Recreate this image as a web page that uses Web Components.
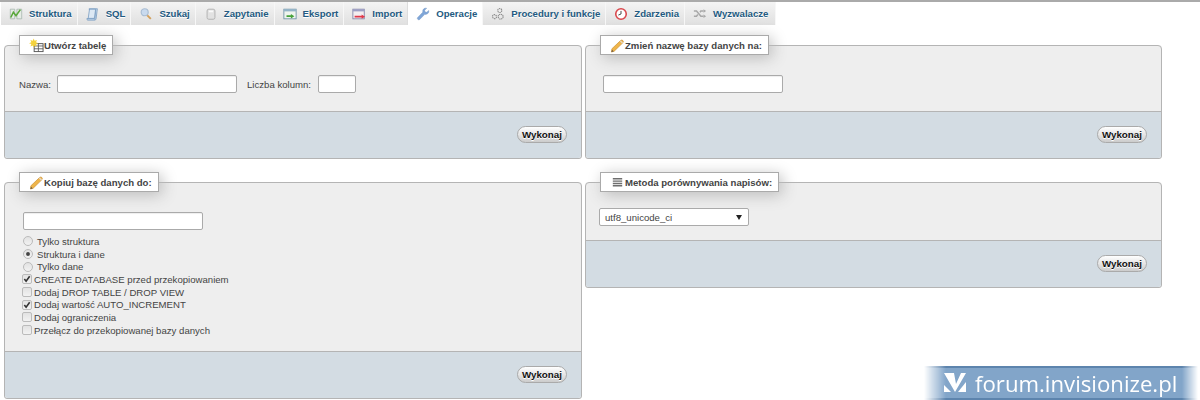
<!DOCTYPE html>
<html lang="pl">
<head>
<meta charset="utf-8">
<title>Operacje</title>
<style>
  html, body { margin: 0; padding: 0; background: #fff; }
  body { font-family: "Liberation Sans", Arial, sans-serif; font-size: 9.6px; color: #444; width: 1200px; height: 400px; overflow: hidden; }
  .kolumny { display: grid; grid-template-columns: 578px 577px; column-gap: 3px; row-gap: 13px; padding: 10px 0 0 4px; align-items: start; }
  .wiersz { display: flex; align-items: center; gap: 9px; }
  .lista { display: flex; flex-direction: column; }
</style>
</head>
<body>

<pasek-zakladek>
  <zakladka-menu ikona="struktura" etykieta="Struktura"></zakladka-menu>
  <zakladka-menu ikona="sql" etykieta="SQL"></zakladka-menu>
  <zakladka-menu ikona="szukaj" etykieta="Szukaj"></zakladka-menu>
  <zakladka-menu ikona="zapytanie" etykieta="Zapytanie"></zakladka-menu>
  <zakladka-menu ikona="eksport" etykieta="Eksport"></zakladka-menu>
  <zakladka-menu ikona="import" etykieta="Import"></zakladka-menu>
  <zakladka-menu ikona="operacje" etykieta="Operacje" aktywna></zakladka-menu>
  <zakladka-menu ikona="procedury" etykieta="Procedury i funkcje"></zakladka-menu>
  <zakladka-menu ikona="zdarzenia" etykieta="Zdarzenia"></zakladka-menu>
  <zakladka-menu ikona="wyzwalacze" etykieta="Wyzwalacze" style="padding-right:7px"></zakladka-menu>
</pasek-zakladek>

<div class="kolumny">
  <panel-operacji ikona="nowa" tytul="Utwórz tabelę" tresc="66">
    <div class="wiersz" style="padding-top:20px">
      <span>Nazwa:</span>
      <pole-tekstowe szerokosc="180" style="margin:0 1px 0 -3px"></pole-tekstowe>
      <span>Liczba kolumn:</span>
      <pole-tekstowe szerokosc="38" style="margin-left:-2px"></pole-tekstowe>
    </div>
  </panel-operacji>

  <panel-operacji ikona="olowek" tytul="Zmień nazwę bazy danych na:" tresc="66">
    <div style="padding:20px 0 0 3px"><pole-tekstowe szerokosc="180"></pole-tekstowe></div>
  </panel-operacji>

  <panel-operacji ikona="olowek" tytul="Kopiuj bazę danych do:" tresc="169">
    <div class="lista" style="padding:20px 0 0 4px">
      <pole-tekstowe szerokosc="180" style="margin-bottom:5px"></pole-tekstowe>
      <pole-wyboru typ="radio">Tylko struktura</pole-wyboru>
      <pole-wyboru typ="radio" zaznaczone>Struktura i dane</pole-wyboru>
      <pole-wyboru typ="radio">Tylko dane</pole-wyboru>
      <pole-wyboru zaznaczone>CREATE DATABASE przed przekopiowaniem</pole-wyboru>
      <pole-wyboru>Dodaj DROP TABLE / DROP VIEW</pole-wyboru>
      <pole-wyboru zaznaczone>Dodaj wartość AUTO_INCREMENT</pole-wyboru>
      <pole-wyboru>Dodaj ograniczenia</pole-wyboru>
      <pole-wyboru>Przełącz do przekopiowanej bazy danych</pole-wyboru>
    </div>
  </panel-operacji>

  <panel-operacji ikona="metoda" tytul="Metoda porównywania napisów:" tresc="58">
    <div style="padding:16px 0 0 0;margin-left:-1px"><lista-napisow>utf8_unicode_ci</lista-napisow></div>
  </panel-operacji>
</div>

<znak-forum>forum.invisionize.pl</znak-forum>

<script>
// ikony rysowane recznie, 16x16
const IKONY = {
  struktura: `<path d="M1.5 2.5h5v11h-5zM9 2.5h5.5v11H9z" fill="#e6ece6" stroke="#9db0a6" stroke-width=".8"/><path d="M2 12l3-6 3 4 5-7" fill="none" stroke="#58a83a" stroke-width="1.8"/>`,
  sql: `<path d="M3.5 2h9.5l-1.5 11.5q-.2 1.5-1.5 1.5H2q-1.2-.2-1-1.8h8q0 1 1 .6L11 3.5H4z" fill="#c3d6ea" stroke="#6d93bb" stroke-width=".8"/><path d="M4 2.5l-1.5 10.5h7l1.5-10.5z" fill="#dce8f4" stroke="#6d93bb" stroke-width=".8"/>`,
  szukaj: `<circle cx="6.5" cy="6" r="4" fill="#c9daee" stroke="#a9bdd3" stroke-width="1.3"/><path d="M9.5 9.5l4 4" stroke="#d3a05c" stroke-width="2.2"/>`,
  zapytanie: `<rect x="3.5" y="2.5" width="9" height="11.5" rx="2" fill="#e2e2e2" stroke="#adadad"/><rect x="5.5" y="4" width="5" height="2" fill="#fafafa"/>`,
  eksport: `<rect x="1" y="2.5" width="14" height="11" fill="#eef4ee" stroke="#6f93a6"/><rect x="1" y="2.5" width="14" height="2.5" fill="#93b4c8"/><path d="M4 9.5h5V8l4 2.5-4 2.5v-1.5H4z" fill="#45a23a"/>`,
  import: `<rect x="1" y="2.5" width="13" height="11" fill="#f3eef0" stroke="#8285a8"/><rect x="1" y="2.5" width="13" height="2.5" fill="#9d9fc4"/><path d="M3 10h8V8.5l4 2.5-4 2.5V12H3z" fill="#e0384a"/>`,
  operacje: `<path d="M2.5 14.5q-1.5-1-.8-2.3l6-6.2q-.5-3 1.5-4.2 1.5-.8 3-.3L9.8 3.8l.6 1.8 1.9.5 2.200-2.100q.5 2-.7 3.200-1.400 1.500-3.800 1.200L4.200 14.300q-.8.7-1.700.2z" fill="#7fa6d8" stroke="#6c90c2" stroke-width=".5"/>`,
  procedury: `<g fill="none" stroke="#8c8c8c" stroke-width="1.3"><circle cx="4" cy="11" r="2.3" stroke-dasharray="1.5 .7"/><circle cx="11" cy="11" r="2.8" stroke-dasharray="1.5 .7"/><circle cx="10" cy="4" r="2.3" stroke-dasharray="1.5 .7"/></g>`,
  zdarzenia: `<circle cx="8" cy="8" r="6" fill="#fff" stroke="#d9474c" stroke-width="1.8"/><path d="M8 4.5V8l-3 1.2" fill="none" stroke="#444" stroke-width="1.1"/>`,
  wyzwalacze: `<path d="M1 4.5h3l5 6h3M1 10.5h3l1.5-2M8 6l1-1.5h3" fill="none" stroke="#a8a8a8" stroke-width="1.7"/><path d="M12 2.5l3 2-3 2zM12 8.5l3 2-3 2z" fill="#a8a8a8"/>`,
  nowa: `<rect x="5.5" y="6" width="9.5" height="8.5" fill="#fff" stroke="#555"/><path d="M5.5 8.5h9.5M5.5 11.5h9.5M10 6v8.5" stroke="#555" stroke-width=".9"/><path d="M5 .5l1 2.5 2.5-1-1 2.5 2.5 1-2.5 1 1 2.5-2.5-1-1 2.5-1-2.5-2.5 1 1-2.5L0 5.5l2.5-1-1-2.5L4 3z" fill="#f4d23c"/>`,
  olowek: `<path d="M2 11.5L11.5 2.5q1.2-.8 2.2.2t.2 2.2L4.5 14 1.5 15z" fill="#efb54a" stroke="#c98f34" stroke-width=".7"/><path d="M11 3l2.5 2.5" stroke="#e7d9c2" stroke-width="1.5"/><path d="M1.500 15l.7-2.5 1.8 1.8z" fill="#6a5a48"/>`,
  metoda: `<path d="M3 4h10M3 6.5h10M3 9h10M3 11.5h10" stroke="#6e6e6e" stroke-width="1.5"/>`
};
const ikona = (nazwa, r = 16) => `<svg width="${r}" height="${r}" viewBox="0 0 16 16" aria-hidden="true">${IKONY[nazwa]}</svg>`;

class PasekZakladek extends HTMLElement {
  constructor() {
    super();
    this.attachShadow({ mode: 'open' }).innerHTML = `
      <style>
        :host { display: flex; height: 23px; border-top: 2px solid #aaa; padding-left: 1px; }
      </style>
      <slot></slot>`;
  }
}

class ZakladkaMenu extends HTMLElement {
  constructor() {
    super();
    this.attachShadow({ mode: 'open' }).innerHTML = `
      <style>
        :host { display: flex; align-items: center; height: 23px; padding: 0 5px 0 8px; border-right: 1px solid #f7f7f7; background: linear-gradient(#f4f4f4, #e0e0e0);
                font: bold 9.6px "Liberation Sans", Arial, sans-serif; color: #235a81; text-shadow: 0 1px 0 #fff; white-space: nowrap; }
        :host([aktywna]) { background: #fff; border-left: 1px solid #ddd; margin-left: -1px; }
        svg { margin-right: 6px; flex: none; }
      </style>
      <span id="ik"></span><span id="tx"></span>`;
  }
  connectedCallback() {
    const ik = this.shadowRoot.getElementById('ik');
    ik.style.display = 'flex';
    ik.innerHTML = ikona(this.getAttribute('ikona'), 14);
    this.shadowRoot.getElementById('tx').textContent = this.getAttribute('etykieta');
  }
}

class PanelOperacji extends HTMLElement {
  constructor() {
    super();
    this.attachShadow({ mode: 'open' }).innerHTML = `
      <style>
        :host { display: block; }
        fieldset { margin: 0; padding: 0; border: 1px solid #b4b4b4; border-radius: 4px 4px 3px 3px; background: #eee; min-width: 0; }
        legend { margin-left: 14px; padding: 0 6px 0 9px; height: 20px; box-sizing: border-box; background: #fff; border: 1px solid #aaa; box-shadow: 3px 3px 15px #bbb;
                 display: flex; align-items: center; font-weight: bold; font-size: 9.6px; color: #444; }
        legend svg { margin-right: 0; flex: none; }
        #tresc { padding: 0 14px; box-sizing: border-box; color: #444; }
        #stopka { height: 46px; background: #d3dce3; border-top: 1px solid #b4b4b4; display: flex; align-items: center; justify-content: flex-end; padding-right: 14px; border-radius: 0 0 3px 3px; }
      </style>
      <fieldset>
        <legend><span id="ik" style="display:flex"></span><span id="ty"></span></legend>
        <div id="tresc"><slot></slot></div>
        <div id="stopka"><przycisk-wykonaj>Wykonaj</przycisk-wykonaj></div>
      </fieldset>`;
  }
  connectedCallback() {
    const s = this.shadowRoot;
    s.getElementById('ik').innerHTML = ikona(this.getAttribute('ikona'), 15);
    s.getElementById('ty').textContent = this.getAttribute('tytul');
    s.getElementById('tresc').style.height = this.getAttribute('tresc') - 10 + 'px';
  }
}

class PrzyciskWykonaj extends HTMLElement {
  constructor() {
    super();
    this.attachShadow({ mode: 'open' }).innerHTML = `
      <style>
        :host { display: inline-flex; align-items: center; justify-content: center; box-sizing: border-box; height: 17px; padding: 0 4px; border: 1px solid #aaa; border-radius: 9px;
                background: linear-gradient(#fff, #ccc); font: bold 9.8px "Liberation Sans", Arial, sans-serif; color: #111; text-shadow: 0 1px 0 #fff; margin-top: -1px; }
      </style><slot></slot>`;
  }
}

class PoleTekstowe extends HTMLElement {
  constructor() {
    super();
    this.attachShadow({ mode: 'open' }).innerHTML = `
      <style>
        :host { display: block; height: 18px; box-sizing: border-box; background: #fff; border: 1px solid #aaa; border-radius: 2px; box-shadow: inset 0 1px 1px #eee; }
      </style>`;
  }
  connectedCallback() { this.style.width = this.getAttribute('szerokosc') + 'px'; }
}

class PoleWyboru extends HTMLElement {
  constructor() {
    super();
    this.attachShadow({ mode: 'open' }).innerHTML = `
      <style>
        :host { display: flex; align-items: center; height: 12.7px; white-space: nowrap; color: #444; }
        #zn { width: 8px; height: 8px; margin: 0 2px 0 -1px; border: 1px solid #bbb; background: linear-gradient(#e2e2e2, #f2f2f2); border-radius: 2px; display: flex; align-items: center; justify-content: center; flex: none; }
        :host([typ="radio"]) #zn { border-radius: 50%; margin: 0 4px 0 0; }
        svg { display: none; }
        :host([zaznaczone]) svg { display: block; }
        :host([typ="radio"]) .p { display: none; }
        :host(:not([typ="radio"])) .k { display: none; }
      </style>
      <span id="zn">
        <svg class="p" width="8" height="8" viewBox="0 0 9 9"><path d="M1.5 4.5l2 2.5 4-5.5" fill="none" stroke="#333" stroke-width="1.8"/></svg>
        <svg class="k" width="4" height="4" viewBox="0 0 5 5"><circle cx="2.5" cy="2.5" r="2.4" fill="#444"/></svg>
      </span><slot></slot>`;
  }
}

class ListaNapisow extends HTMLElement {
  constructor() {
    super();
    this.attachShadow({ mode: 'open' }).innerHTML = `
      <style>
        :host { display: flex; align-items: center; justify-content: space-between; width: 150px; height: 18px; box-sizing: border-box; padding: 0 5px; background: #fff; border: 1px solid #aaa; border-radius: 2px; color: #444; }
        i { width: 0; height: 0; border-left: 3px solid transparent; border-right: 3px solid transparent; border-top: 5px solid #222; margin-right: 1px; }
      </style><span><slot></slot></span><i></i>`;
  }
}

class ZnakForum extends HTMLElement {
  constructor() {
    super();
    this.attachShadow({ mode: 'open' }).innerHTML = `
      <style>
        /* znak wodny lezy nad strona */
        :host { position: absolute; left: 924px; top: 366px; width: 274px; height: 34px; box-sizing: border-box; display: flex; align-items: center; gap: 8px; padding-left: 19px; color: #fff;
                font: 22.2px "Open Sans", "Liberation Sans", sans-serif;
                border-top: 2px solid #5d84ad; border-bottom: 2px solid #5d84ad;
                background: #82a5c9;
                -webkit-mask-image: linear-gradient(90deg, transparent 0, #000 22px, #000 258px, transparent 274px); mask-image: linear-gradient(90deg, transparent 0, #000 22px, #000 258px, transparent 274px); }
        svg { flex: none; }
      </style>
      <svg width="24" height="22" viewBox="0 0 24 22"><path d="M1 1h10l2 11 5-11h5L12 20z" fill="#fff"/><path d="M1 13l7 7H1z" fill="#fff"/><path d="M23 10v10h-8z" fill="#fff"/></svg>
      <span><slot></slot></span>`;
  }
}

customElements.define('pasek-zakladek', PasekZakladek);
customElements.define('zakladka-menu', ZakladkaMenu);
customElements.define('panel-operacji', PanelOperacji);
customElements.define('przycisk-wykonaj', PrzyciskWykonaj);
customElements.define('pole-tekstowe', PoleTekstowe);
customElements.define('pole-wyboru', PoleWyboru);
customElements.define('lista-napisow', ListaNapisow);
customElements.define('znak-forum', ZnakForum);
</script>
</body>
</html>
